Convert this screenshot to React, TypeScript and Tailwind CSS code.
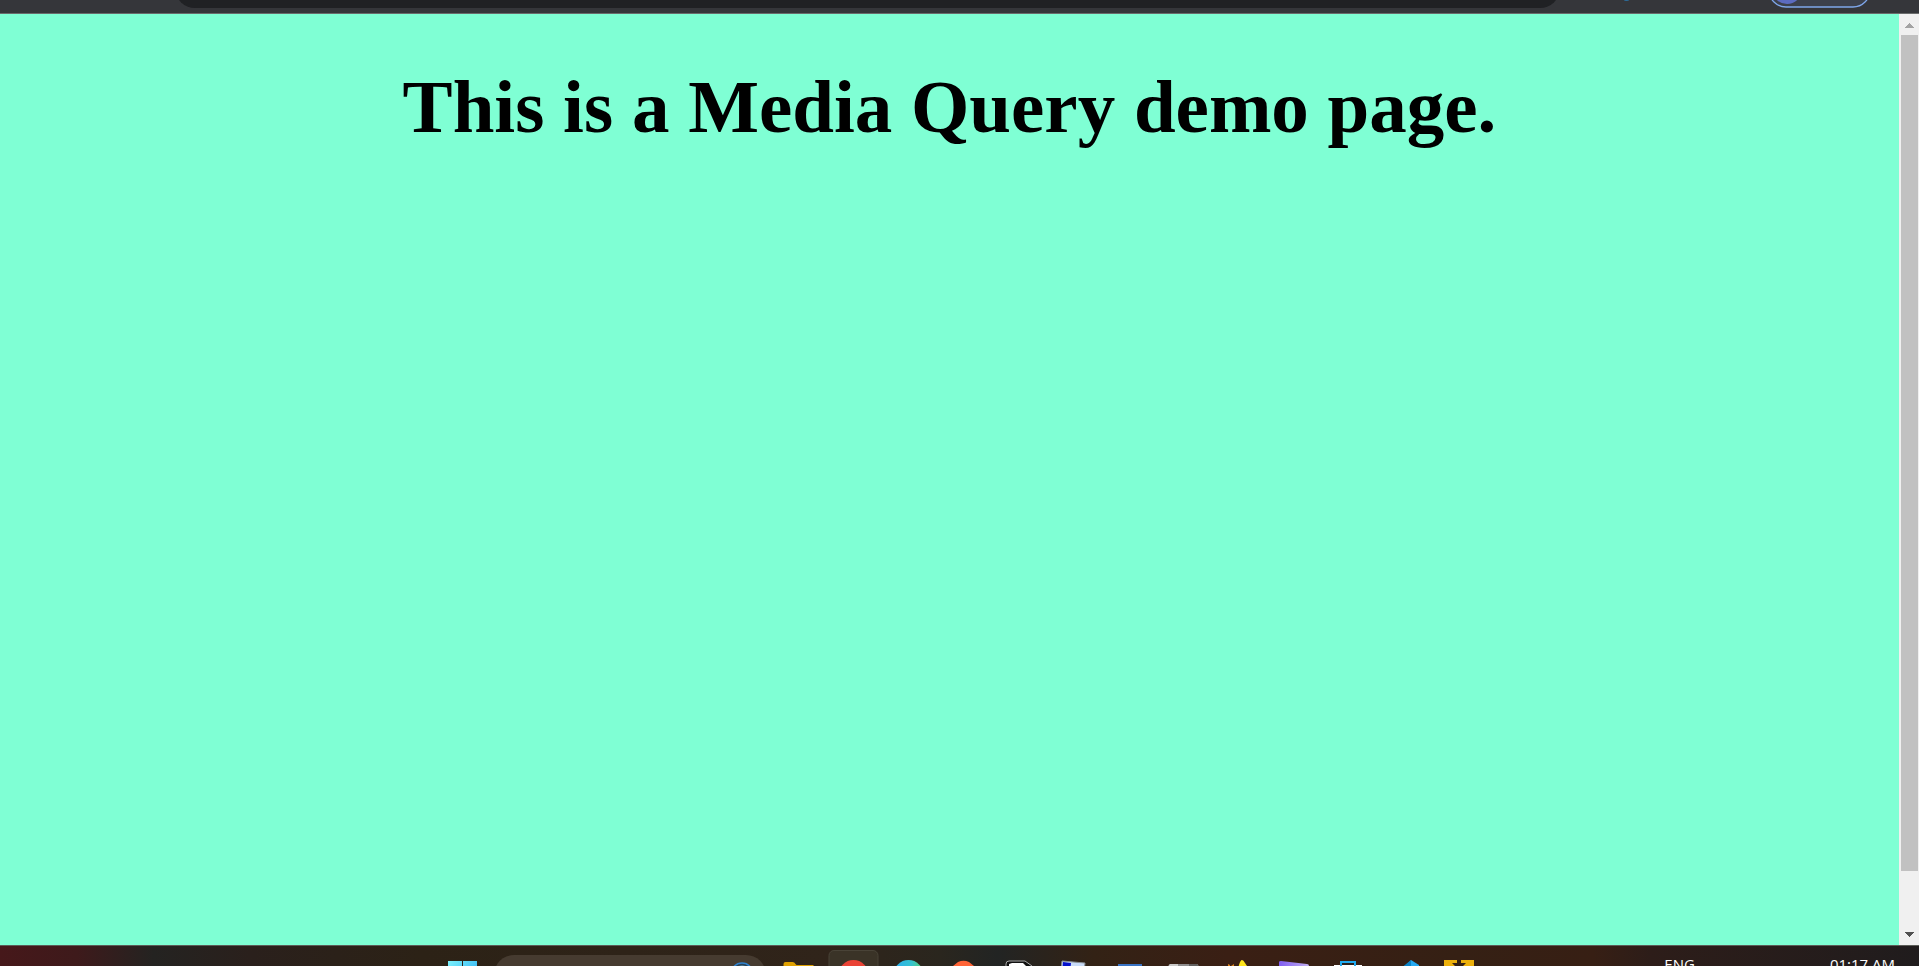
import type { ReactNode } from "react";

function BrowserToolbar() {
  return (
    <header className="relative flex h-[14px] shrink-0 overflow-hidden border-b border-[#6a6c6c] bg-[#35363a]">
      <div className="mr-[359px] ml-[175px] flex flex-1 items-end pb-[5px]">
        <div className="-mt-8 h-10 w-full shrink-0 rounded-full bg-[#202124]" />
      </div>
      <svg className="absolute top-0 right-0 h-[13px] w-[361px]" viewBox="1558 0 361 13" aria-hidden="true">
        <ellipse cx="1626.500" cy="-1" rx="3" ry="2" fill="#2d6d9b" />
        <rect x="1769" y="-27" width="101" height="34" rx="17" fill="#3c404b" stroke="#7ea6ea" strokeWidth="1.300" />
        <circle cx="1787" cy="-11" r="15" fill="#5c6bc0" />
      </svg>
    </header>
  );
}

function ScrollBar() {
  return (
    <div className="flex w-5 shrink-0 flex-col bg-[#f0f0f0]" aria-hidden="true">
      <svg className="h-[21px] w-5 shrink-0" viewBox="0 0 20 21" shapeRendering="crispEdges">
        <path d="M6 14h9v-1h-1v-1h-1v-1h-1v-1h-1v-1h-1v1h-1v1h-1v1h-1v1h-1z" fill="#a3a3a3" />
      </svg>
      <div className="flex flex-1 flex-col pr-px pl-[2px]">
        <div className="grow-[94] bg-[#c1c1c1]" />
        <div className="grow-[6]" />
      </div>
      <svg className="h-[21px] w-5 shrink-0" viewBox="0 0 20 21" shapeRendering="crispEdges">
        <path d="M6 8h9v1h-1v1h-1v1h-1v1h-1v1h-1v-1h-1v-1h-1v-1h-1v-1h-1z" fill="#505050" />
      </svg>
    </div>
  );
}

function TaskIcon({ label, children, active = false }: { label: string; children: ReactNode; active?: boolean }) {
  return (
    <button type="button" aria-label={label} className="h-12 w-[55px] shrink-0">
      <svg className="h-12 w-[55px]" viewBox="0 0 55 48">
        {active && <rect x="3" y="4.500" width="49" height="49" rx="5" fill="#3a3327" stroke="#494337" />}
        {children}
      </svg>
    </button>
  );
}

function TaskBar() {
  return (
    <footer className="flex h-[21px] shrink-0 items-start overflow-hidden border-t border-[#5b5c57] bg-[linear-gradient(90deg,#46181a_0%,#3e1a1b_4%,#242321_8%,#2a201c_13%,#2c2216_22%,#30241a_43%,#2a261e_49%,#222423_52%,#332215_57%,#3a1f14_64%,#352014_76%,#371f14_83%,#2d1d19_86%,#201c1d_100%)]">
      <div className="flex-1 pl-6" />
      <nav className="flex items-start" aria-label="Taskbar">
        <TaskIcon label="Start">
          <defs>
            <linearGradient id="start" x2="1" y2="1">
              <stop stopColor="#7df1fb" />
              <stop offset="1" stopColor="#169df1" />
            </linearGradient>
          </defs>
          <path d="M14 15h14v14H14zM29 15h14v14H29zM14 30h14v14H14zM29 30h14v14H29z" fill="url(#start)" />
        </TaskIcon>
        <button type="button" aria-label="Search" className="mx-[5px] mt-[9px] h-10 w-[272px] shrink-0 rounded-full bg-[#463b30]">
          <svg className="h-10 w-[272px]" viewBox="0 0 272 40">
            <circle cx="248" cy="19" r="11" fill="#284258" stroke="#2f82ce" strokeWidth="1.500" />
            <path d="M242 14q6-6 12 0" fill="none" stroke="#55879d" strokeWidth="1.500" />
          </svg>
        </button>
        <TaskIcon label="File Explorer">
          <path d="M12.500 18q0-2 2-2h7q2 0 3 2l1 1h17v22h-30z" fill="#dfa000" />
        </TaskIcon>
        <TaskIcon label="Chrome" active>
          <circle cx="27.500" cy="29" r="15" fill="#ea4335" />
          <circle cx="27.500" cy="29" r="6" fill="#fff" />
        </TaskIcon>
        <TaskIcon label="Edge">
          <defs>
            <linearGradient id="edge">
              <stop stopColor="#29aef2" />
              <stop offset=".6" stopColor="#35c2cf" />
              <stop offset="1" stopColor="#5ad26b" />
            </linearGradient>
          </defs>
          <circle cx="27.500" cy="29" r="15" fill="url(#edge)" />
        </TaskIcon>
        <TaskIcon label="Brave">
          <path d="M17 20l5-4q5.500-2.500 11 0l5 4 2 5-4 15-8 5-9-5-5-15z" fill="#ff6436" />
        </TaskIcon>
        <TaskIcon label="3D Viewer">
          <path d="M15 18q0-3 3-3h16l7 5v22l-13 3-13-7z" fill="#111" stroke="#aaa" strokeWidth="1" />
          <path d="M18 18l3-1h11l4 4v8H18z" fill="#fff" />
        </TaskIcon>
        <TaskIcon label="Desktop App">
          <path d="M16 15l23 2-3 27-23-3z" fill="#c9dcf8" stroke="#899095" />
          <path d="M17 16l8 1-1 10-8-1z" fill="#0611cc" />
        </TaskIcon>
        <TaskIcon label="Documents">
          <path d="M17 18h24v26H17z" fill="#3973c4" />
        </TaskIcon>
        <TaskIcon label="Media">
          <rect x="12.500" y="18" width="30" height="26" rx="2" fill="#8f8d8d" />
          <path d="M14 18h8v8h-9.500v-6z" fill="#c9c8c7" />
          <path d="M33 18h8l1.500 2v7H33z" fill="#62605f" />
        </TaskIcon>
        <TaskIcon label="Design App">
          <path d="M31 14q1.500 0 3 3l8 12-18 3 4-13q1.500-5 3-5z" fill="#ffe51c" />
          <path d="M17 18l2 1v2h-2zM20 20l3-2v3h-2z" fill="#df841c" />
        </TaskIcon>
        <TaskIcon label="Video Editor">
          <defs>
            <linearGradient id="video">
              <stop stopColor="#7f5cf0" />
              <stop offset="1" stopColor="#c3b0f2" />
            </linearGradient>
          </defs>
          <path d="M13 16q0-1 2-1l26 3q2 0 2 2v24H13z" fill="url(#video)" />
        </TaskIcon>
        <TaskIcon label="Microsoft Store">
          <path d="M13 19h28v24H13z" fill="#fff" />
          <path d="M21 16h12v3H21z" fill="#29211d" />
          <path d="M20 24v-8h14v8" fill="none" stroke="#20aaf0" strokeWidth="2" />
        </TaskIcon>
        <TaskIcon label="Visual Studio Code">
          <path d="M35 14l8 5v23l-8 4-16-14z" fill="#24a9f2" />
          <path d="M35 14l-16 13 8 5 8-12z" fill="#0b83c6" />
        </TaskIcon>
        <TaskIcon label="Binance">
          <path d="M13 14h13v3h-5l3 3-3 3h-8zM30 14h13v9h-8l-3-3 3-3h-5z" fill="#edb00b" />
        </TaskIcon>
      </nav>
      <div className="flex flex-1 justify-end gap-[135px] pt-2 pr-6 font-['Open_Sans','Noto_Sans',sans-serif] text-[15px] leading-5 whitespace-nowrap text-white">
        <span>ENG</span>
        <time>01:17 AM</time>
      </div>
    </footer>
  );
}

export default function App() {
  return (
    <div className="flex h-screen flex-col overflow-hidden">
      <BrowserToolbar />
      <div className="flex min-h-0 flex-1">
        <main className="flex-1 bg-[#7fffd4] pt-[50px]">
          <h1 className="text-center font-['Liberation_Serif',serif] text-[75px] leading-[86px] font-bold text-black">
            This is a Media Query demo page.
          </h1>
        </main>
        <ScrollBar />
      </div>
      <TaskBar />
    </div>
  );
}
